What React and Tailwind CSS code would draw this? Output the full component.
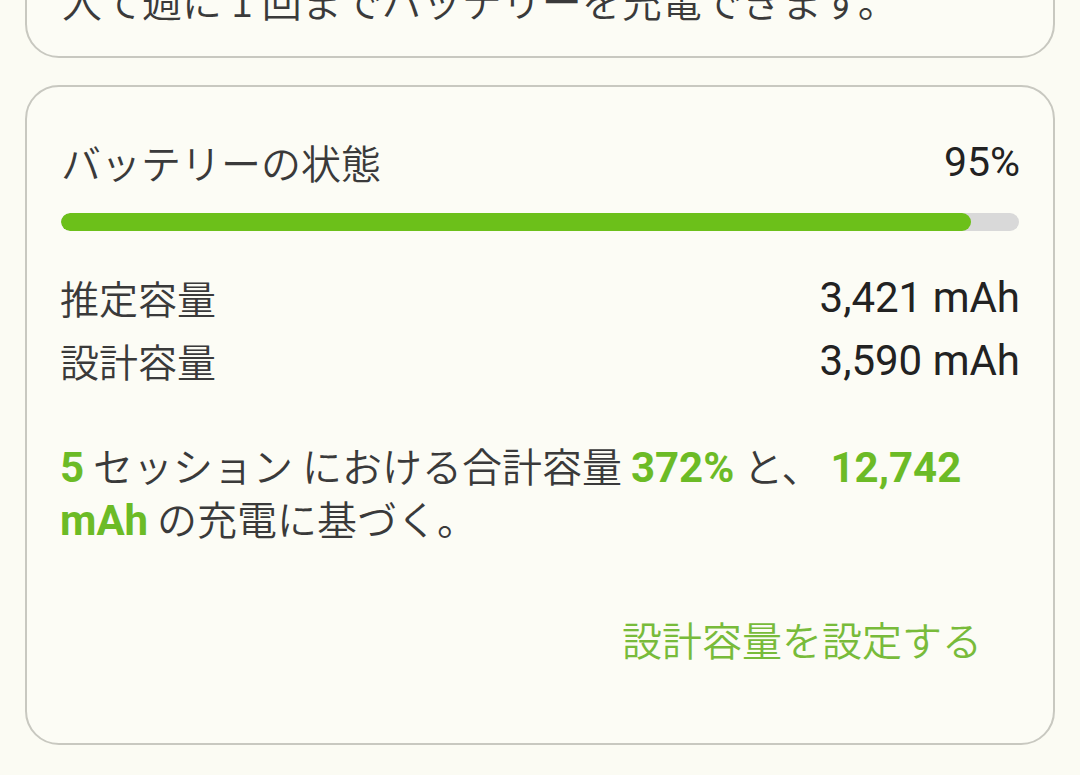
export default function App() {
  const jp = { fontFamily: '"Noto Sans CJK JP", "Noto Sans", sans-serif' };
  const num = { fontFamily: 'Roboto, "Noto Sans CJK JP", sans-serif' };
  const pct = 95;
  return (
    <div className="w-[1080px] h-[775px] overflow-hidden bg-[#fbfbf3] px-[25px]" style={jp}>
      <div className="-mt-[100px] h-[158px] rounded-[34px] border-2 border-[#c8c8c0] bg-[#fcfcf5] flex flex-col justify-end pb-[31px] px-[35px]">
        <div className="text-[40px] leading-[50px] font-[350] text-[#3a3a3a]">入て週に 1 回までバッテリーを充電できます。</div>
      </div>
      <div className="mt-[27px] h-[660px] rounded-[34px] border-2 border-[#c8c8c0] bg-[#fcfcf5] pt-[50px] px-[33px] flex flex-col">
        <div className="flex justify-between items-center h-[50px]">
          <span className="text-[40px] leading-[50px] font-[350] pl-[1px] text-[#3a3a3a]">バッテリーの状態</span>
          <span className="text-[41px] leading-[50px] text-[#222222]" style={num}>95%</span>
        </div>
        <div className="mt-[26px] h-[18px] rounded-full bg-[#d9d9d9] overflow-hidden mx-[1px]">
          <div className="h-full rounded-full bg-[#6cc01a]" style={{ width: `${pct}%` }} />
        </div>
        <div className="mt-[35px] flex flex-col">
          <div className="flex justify-between items-center h-[63px]">
            <span className="text-[39px] font-[350] text-[#3a3a3a]">推定容量</span>
            <span className="text-[42px] text-[#222222]" style={num}>3,421 mAh</span>
          </div>
          <div className="flex justify-between items-center h-[63px]">
            <span className="text-[39px] font-[350] text-[#3a3a3a]">設計容量</span>
            <span className="text-[42px] text-[#222222]" style={num}>3,590 mAh</span>
          </div>
        </div>
        <p className="mt-[48px] text-[40px] leading-[50px] font-[350] text-[#3a3a3a] pr-[30px]">
          <b className="text-[#6cbb26] text-[42px] font-bold leading-[50px]" style={num}>5</b> セッション における合計容量 <b className="text-[#6cbb26] text-[42px] font-bold leading-[50px]" style={num}>372%</b> と、 <b className="text-[#6cbb26] text-[42px] font-bold leading-[50px]" style={num}>12,742 mAh</b> の充電に基づく。
        </p>
        <div className="mt-[68px] flex justify-end pr-[38px]">
          <span className="text-[40px] leading-[50px] font-[350] text-[#78bb3a]">設計容量を設定する</span>
        </div>
      </div>
    </div>
  );
}
